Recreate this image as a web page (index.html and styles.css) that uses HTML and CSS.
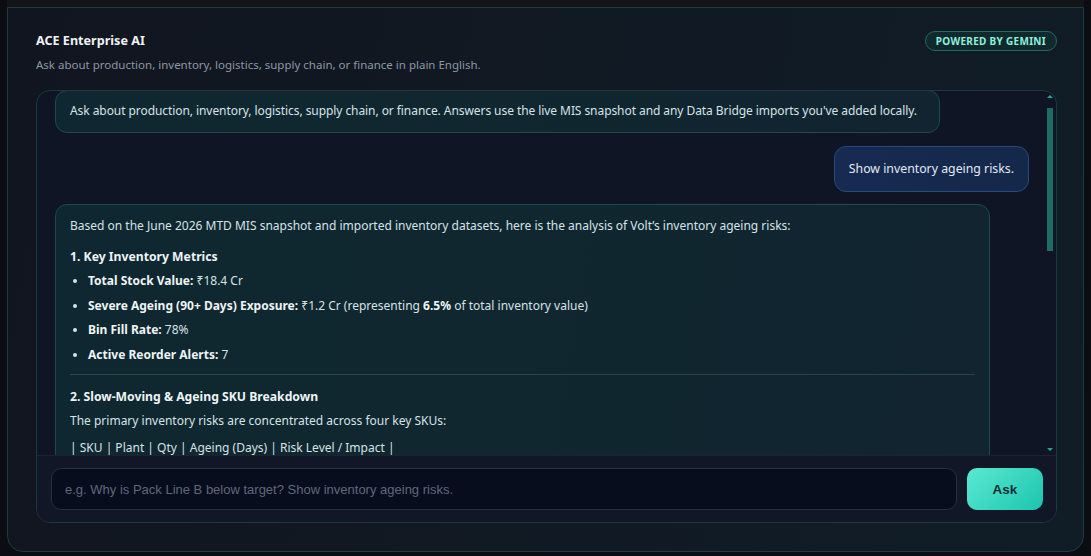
FILE: index.html
```html
<!DOCTYPE html>
<html lang="en">
<head>
<meta charset="utf-8">
<title>ACE Enterprise AI</title>
<link rel="stylesheet" href="styles.css">
</head>
<body>
<div class="topband"></div>
<section class="card">
  <header class="card-head">
    <div class="titles">
      <h1 class="title">ACE Enterprise AI</h1>
      <p class="subtitle">Ask about production, inventory, logistics, supply chain, or finance in plain English.</p>
    </div>
    <span class="badge">POWERED BY GEMINI</span>
  </header>
  <div class="chat">
    <div class="messages">
      <div class="msg bot intro">Ask about production, inventory, logistics, supply chain, or finance. Answers use the live MIS snapshot and any Data Bridge imports you've added locally.</div>
      <div class="msg user">Show inventory ageing risks.</div>
      <div class="msg bot answer">
        <p>Based on the June 2026 MTD MIS snapshot and imported inventory datasets, here is the analysis of Volt’s inventory ageing risks:</p>
        <h3>1. Key Inventory Metrics</h3>
        <ul>
          <li><strong>Total Stock Value:</strong> ₹18.4 Cr</li>
          <li><strong>Severe Ageing (90+ Days) Exposure:</strong> ₹1.2 Cr (representing <strong>6.5%</strong> of total inventory value)</li>
          <li><strong>Bin Fill Rate:</strong> 78%</li>
          <li><strong>Active Reorder Alerts:</strong> 7</li>
        </ul>
        <hr>
        <h3>2. Slow-Moving &amp; Ageing SKU Breakdown</h3>
        <p>The primary inventory risks are concentrated across four key SKUs:</p>
        <p class="last">| SKU | Plant | Qty | Ageing (Days) | Risk Level / Impact |</p>
      </div>
      <div class="scrollbar"><span class="arrow up"></span><span class="thumb"></span><span class="arrow down"></span></div>
    </div>
    <form class="ask-row">
      <input class="ask-input" type="text" placeholder="e.g. Why is Pack Line B below target? Show inventory ageing risks.">
      <button class="ask-btn" type="button">Ask</button>
    </form>
  </div>
</section>
</body>
</html>
```
FILE: styles.css
```css
* { box-sizing: border-box; }
html, body { margin: 0; padding: 0; }
body {
  width: 1091px;
  height: 556px;
  overflow: hidden;
  background: #0b0d12;
  font-family: "Noto Sans", "DejaVu Sans", sans-serif;
  color: #d6e1e6;
}
.topband {
  height: 7px;
  margin: 0 7px;
  background: #131519;
}
.card {
  margin: 0 7px;
  height: 545px;
  border: 1px solid #1d3d3f;
  border-radius: 0 0 16px 16px;
  background: linear-gradient(100deg, #11151f 0%, #111a24 60%, #101d26 100%);
  padding: 22px 26px 28px 28px;
  display: flex;
  flex-direction: column;
}
.card-head {
  display: flex;
  justify-content: space-between;
  align-items: flex-start;
  height: 60px;
}
.title {
  margin: 2px 0 0;
  font-size: 12.6px;
  font-weight: 700;
  color: #eef3f5;
  line-height: 18px;
}
.subtitle {
  margin: 7px 0 0;
  font-size: 11.5px;
  color: #8d97a6;
  line-height: 16px;
}
.badge {
  margin-top: 1px;
  border: 1px solid #1f6a62;
  background: #10292c;
  color: #8ff0de;
  font-size: 10px;
  font-weight: 700;
  letter-spacing: 0.3px;
  border-radius: 12px;
  padding: 2px 10px 2px;
  line-height: 14px;
}
.chat {
  flex: 1;
  border: 1px solid #1b3a3d;
  border-radius: 14px;
  background: #0f1524;
  display: flex;
  flex-direction: column;
  overflow: hidden;
}
.messages {
  position: relative;
  height: 365px;
  overflow: hidden;
  padding: 0 60px 0 18px;
  display: flex;
  flex-direction: column;
  align-items: flex-start;
  border-bottom: 1px solid #1a2431;
}
.msg {
  font-size: 12px;
  line-height: 18px;
  border-radius: 12px;
}
.bot {
  background: linear-gradient(100deg, #0f2730 0%, #10272f 50%, #112430 100%);
  border: 1px solid #1d4b4d;
  color: #d6e3e6;
}
.intro {
  margin-top: -1px;
  width: 885px;
  padding: 11px 14px 12px;
  white-space: nowrap;
  letter-spacing: -0.07px;
}
.user {
  align-self: flex-end;
  margin: 13px -33px 0 0;
  background: linear-gradient(100deg, #172a52, #14284a);
  border: 1px solid #2a4a78;
  color: #e2e9f4;
  font-size: 12.3px;
  padding: 13px 14px 13px 14px;
}
.answer {
  margin-top: 12px;
  width: 935px;
  padding: 12px 14px 12px 14px;
}
.answer p { margin: 0 0 9px; }
.answer h3 {
  margin: 13px 0 6px;
  font-size: 12.2px;
  font-weight: 700;
  color: #eef4f5;
}
.answer strong { color: #eef4f5; }
.answer ul {
  margin: 0;
  padding-left: 18px;
}
.answer li { margin-bottom: 6.5px; }
.answer hr {
  border: 0;
  border-top: 1px solid #24474b;
  margin: 10px 0 12px;
}
.scrollbar {
  position: absolute;
  right: 2px;
  top: 0;
  bottom: 0;
  width: 8px;
  display: flex;
  flex-direction: column;
  align-items: center;
}
.arrow {
  width: 0; height: 0;
  border-left: 3px solid transparent;
  border-right: 3px solid transparent;
}
.arrow.up { border-bottom: 3px solid #2aa595; margin-top: 4px; }
.arrow.down { border-top: 3px solid #2aa595; margin-top: auto; margin-bottom: 4px; }
.thumb {
  width: 6px;
  height: 143px;
  margin-top: 10px;
  background: #1e6c64;
}
.ask-row {
  display: flex;
  gap: 10px;
  padding: 12px 13px 12px 14px;
  margin: 0;
  background: #111726;
  flex: 1;
}
.ask-input {
  flex: 1;
  height: 42px;
  background: #080d1e;
  border: 1px solid #272f3d;
  border-radius: 10px;
  color: #d0d8e0;
  font-family: "Liberation Sans", Arial, sans-serif;
  font-size: 13px;
  padding: 0 13px;
  outline: none;
}
.ask-input::placeholder { color: #5f687a; }
.ask-btn {
  width: 76px;
  height: 42px;
  border: 0;
  border-radius: 10px;
  background: linear-gradient(135deg, #5ae9d2 0%, #1cc5ae 100%);
  color: #0f2f33;
  font-family: "Liberation Sans", Arial, sans-serif;
  font-weight: 700;
  font-size: 13.5px;
}
```
